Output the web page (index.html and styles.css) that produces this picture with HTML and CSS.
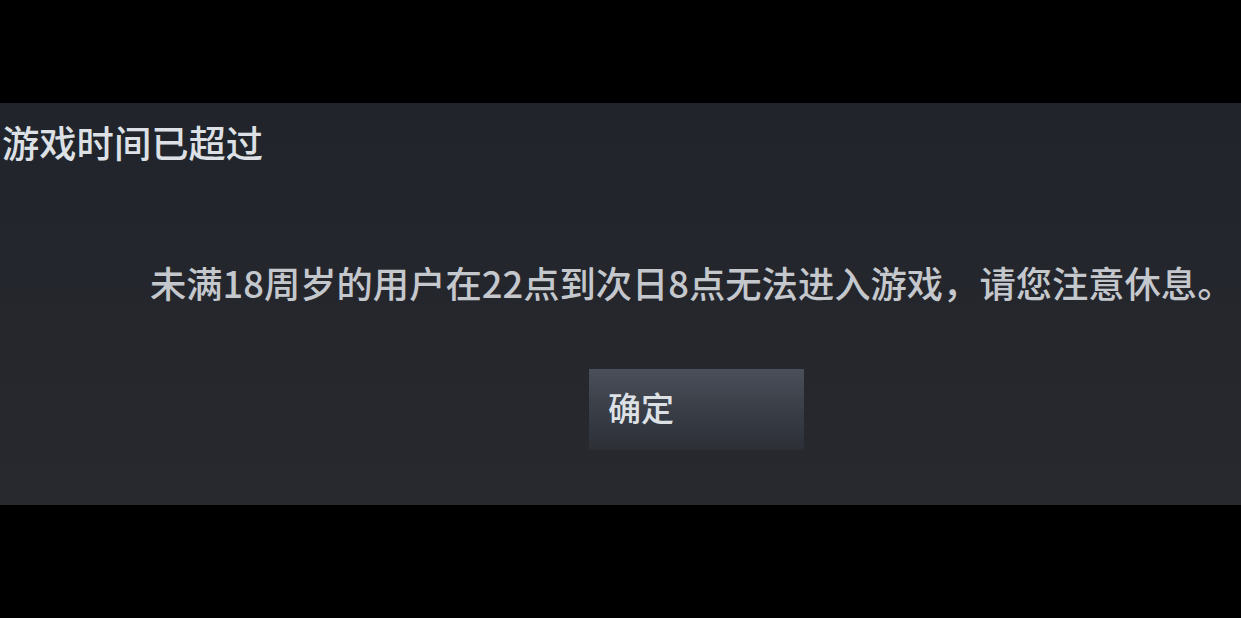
FILE: index.html
```html
<!DOCTYPE html>
<html lang="zh-CN">
<head>
<meta charset="utf-8">
<link rel="stylesheet" href="styles.css">
</head>
<body>
<div class="dialog">
  <div class="title">游戏时间已超过</div>
  <div class="content">
    <p class="message">未满18周岁的用户在22点到次日8点无法进入游戏，请您注意休息。</p>
    <button class="btn">确定</button>
  </div>
</div>
</body>
</html>
```
FILE: styles.css
```css
html, body {
  margin: 0;
  padding: 0;
  background: #000;
  width: 1241px;
  height: 618px;
  overflow: hidden;
}
.dialog {
  margin-top: 103px;
  height: 402px;
  box-sizing: border-box;
  background: linear-gradient(180deg, #21242b 0%, #25272d 60%, #27292e 100%);
  font-family: "Noto Sans CJK SC", "Liberation Sans", sans-serif;
  padding-top: 19px;
}
.title {
  font-size: 37.3px;
  line-height: 40px;
  color: #dde1e6;
  padding-left: 2px;
  font-weight: 500;
}
.content {
  display: flex;
  flex-direction: column;
  align-items: flex-start;
}
.message {
  margin: 98px 0 0 150px;
  font-size: 36.3px;
  line-height: 44px;
  color: #c4c8cd;
  white-space: nowrap;
  font-weight: 500;
}
.btn {
  margin: 65px 0 0 589px;
  width: 215px;
  height: 81px;
  border: none;
  padding: 0 0 5px 19px;
  text-align: left;
  font-family: inherit;
  font-size: 33px;
  font-weight: 500;
  color: #dde1e6;
  background: linear-gradient(180deg, #4a4f59 0%, #3a3e47 50%, #2c2f36 100%);
}
```
